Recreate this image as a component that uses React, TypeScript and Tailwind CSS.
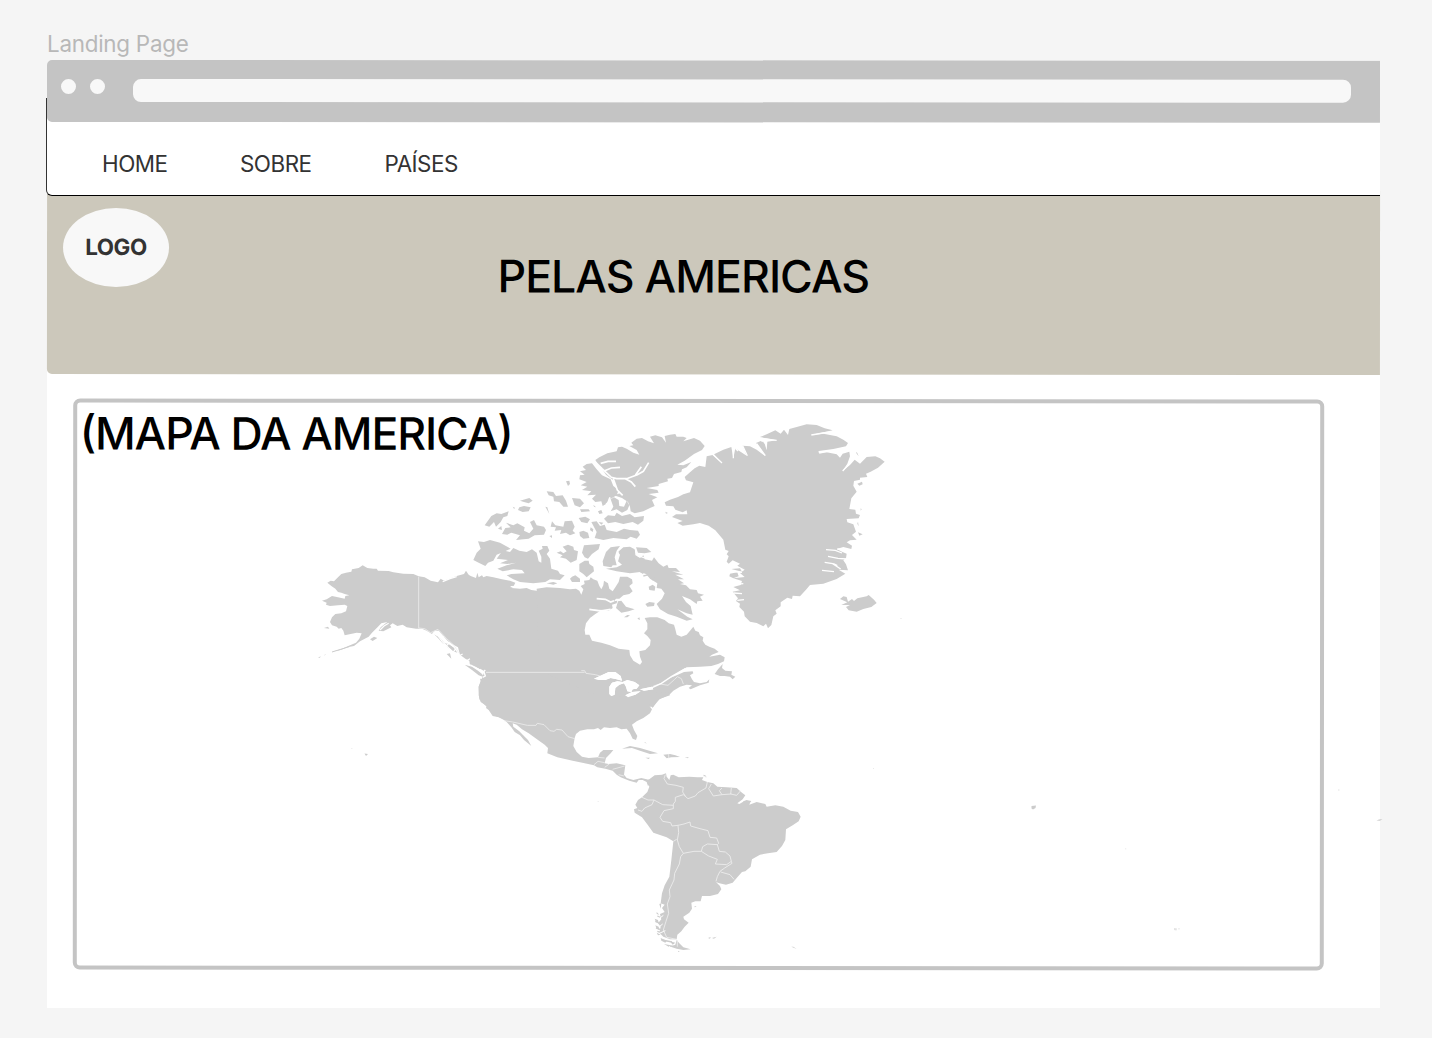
import React from "react";

const NAV_ITEMS = [
  { label: "HOME", width: "w-[138px]" },
  { label: "SOBRE", width: "w-[144.5px]" },
  { label: "PAÍSES", width: "w-[100px]" },
];

function BrowserBar() {
  return (
    <div className="relative z-10 h-[61.5px] w-[1332.5px] shrink-0 origin-left rotate-[0.03deg] rounded-l-[5px] bg-[#c4c4c4]">
      <div className="flex h-full items-start pl-[14px] pt-[18.5px]">
        <span className="size-[15px] rounded-full bg-[#f8f8f8]" />
        <span className="ml-[14px] size-[15px] rounded-full bg-[#f8f8f8]" />
        <span className="ml-[27.5px] h-[23px] w-[1218.500px] rounded-[8px] bg-[#f8f8f8]" />
      </div>
    </div>
  );
}

function NavBar() {
  return (
    <nav className="relative z-[5] -ml-px -mt-[23.500px] flex h-[97.500px] w-[1333.5px] shrink-0 items-end rounded-bl-[6px] border-b border-l border-b-black border-l-[#333333] bg-white pb-[17px] pl-[55px]">
      {NAV_ITEMS.map((item) => (
        <a key={item.label} className={`${item.width} text-[22.4px] leading-[28px] tracking-[-0.5px] text-[#333333]`}>
          {item.label}
        </a>
      ))}
    </nav>
  );
}

function Hero() {
  return (
    <header className="-mt-[6px] h-[184px] w-[1332.5px] shrink-0 origin-left rotate-[0.045deg] rounded-bl-[5px] bg-[#ccc8bb] pt-[17.5px]">
      <div className="flex">
        <div className="ml-[16px] flex h-[79px] w-[106px] items-center justify-center rounded-[50%] bg-[#f8f8f8] text-[22.4px] font-bold tracking-[-0.4px] text-[#333333]">
          LOGO
        </div>
        <h1 className="ml-[328.500px] mt-[40.500px] text-[44.6px] font-medium leading-[56px] tracking-[-0.95px] text-black">
          PELAS AMERICAS
        </h1>
      </div>
    </header>
  );
}

function AmericasMap() {
  return (
    <svg
      className="pointer-events-none absolute -top-[60px] -left-[47px] z-20 h-[1038px] w-[1432px]"
      viewBox="0 0 1432 1038"
      fill="#cccccc"
      aria-label="Mapa da América"
    >
      {/* Alaska and western Canada */}
      <g transform="translate(310 540) scale(.33333)">
        <path d="M52,128 62,122 72,124 84,112 94,102 108,98 124,95 126,88 146,84 158,76 172,84 190,86 200,86 204,92 236,93 250,97 280,101 310,102 326,109 344,112 362,122 384,127 392,116 402,122 440,108 462,102 468,92 476,104 482,108 498,114 502,98 506,112 516,106 520,112 530,108 550,112 576,118 600,122 616,128 610,140 604,144 630,146 650,144 664,150 680,152 688,166 690,156 684,148 700,148 724,146V560L590,545 582,540 566,532 548,528 536,510 528,504 530,498 512,486 506,466 506,440 512,424 510,416 520,418 526,408 524,396 510,388 496,380 480,376 478,362 466,356 450,344 444,322 430,314 414,304 400,288 386,272 374,272 366,282 350,272 336,266 318,266 290,262 278,254 262,258 248,250 240,256 244,262 220,274 206,272 212,262 232,246 214,250 204,260 186,278 176,290 150,304 132,318 112,322 92,330 72,334 96,326 120,316 138,308 148,296 155,280 140,278 122,282 104,286 100,272 94,264 86,266 80,260 66,256 60,246 66,232 76,222 94,220 108,214 112,198 104,194 84,196 60,198 48,194 50,188 36,182 50,178 66,168 84,172 104,176 106,168 118,166 104,162 94,158 84,156 76,146 64,138Z" />
        <path d="M180,298 192,290 202,294 188,303ZM42,264 54,260 58,266ZM44,344 50,341 42,347ZM24,353 32,349 30,353ZM410,342 420,340 424,356ZM372,282 384,288 392,296 408,314 398,310 386,296ZM404,310 416,312 430,322 442,338 426,332 412,322ZM464,374 486,380 504,392 516,402 522,412 506,406 486,390Z" />
        <path d="M66,336 92,328 118,320" fill="none" stroke="#cccccc" strokeWidth="3" />
        <path d="M602,140 640,138 664,142 682,132 700,126 724,132M398,125 420,116 440,110M462,370 484,376 506,388 524,402M368,278 384,288 398,306 416,324 436,342 456,360M380,274 394,290 412,306 432,320M392,298 402,290M408,318 420,308M430,336 440,322M210,270 222,258 236,250M446,348 458,342M470,362 480,356" fill="none" stroke="#fff" strokeWidth="3.5" />
        <path d="M326,110V264L344,266 362,278 384,268 410,296 432,316 446,338" fill="none" stroke="#eeeeee" strokeWidth="2.4" />
      </g>

      {/* Eastern Canada around Hudson Bay */}
      <g transform="translate(540 530) scale(.33333)">
        <path d="M-10,176 20,172 60,174 90,178 108,176 118,182 124,194 130,178 122,168 134,162 132,152 148,150 152,142 160,148 172,152 178,168 184,178 190,166 192,152 204,160 208,176 218,184 226,172 236,156 240,140 262,140 276,148 278,160 268,168 278,184 268,192 250,196 238,206 228,206 222,214 232,212 230,220 216,224 218,234 206,242 190,240 150,238 180,243 166,252 150,264 138,280 134,300 136,314 148,314 156,332 184,338 210,346 236,356 268,360 270,376 280,392 300,404 306,396 300,380 298,364 316,360 330,346 332,330 322,318 312,310 322,298 322,280 314,264 330,262 352,262 374,270 386,280 402,284 406,298 410,314 424,320 440,314 452,300 460,290 466,302 476,306 480,316 490,322 488,332 496,344 508,350 524,356 536,366 516,374 508,380 540,374 554,382 552,394 534,402 514,408 480,410 440,412 420,424 390,444 410,436 432,426 458,424 460,430 450,436 456,448 462,456 480,460 500,456 508,448 506,458 480,466 452,478 446,474 456,466 440,464 420,470 400,482 388,494 358,508 340,530H0Z" />
        <path d="M524,432 534,418 548,402 546,414 556,422 576,424 574,434 586,440 578,448 570,440 554,438 540,438ZM228,234 234,214 244,212 258,230 284,238 266,244 244,248ZM316,222 328,216 344,218 342,228 322,230ZM326,170 338,164 346,170 344,182 328,180ZM252,262 262,255 270,256 262,262ZM292,266 298,262 300,270ZM20,160 40,156 52,160 40,164Z" />
        <path d="M170,206 196,208 212,216 222,212M148,238 180,243 212,238" fill="none" stroke="#fff" strokeWidth="5" />
        <path d="M124,422 134,422 138,430 166,434 180,438M340,468 360,462 384,466 404,448 412,440 424,446 430,462" fill="none" stroke="#eeeeee" strokeWidth="2.4" />
        <path d="M162,446 188,434 206,426 226,426 242,438 246,452 230,448 212,444 196,450 178,450ZM208,492 208,470 216,458 232,454 248,456 262,450 284,456 298,466 290,476 278,478 274,486 262,484 258,470 252,460 238,464 226,474 224,494 214,498ZM256,496 276,486 302,484 286,494 264,502ZM300,478 336,470 340,478 312,482Z" fill="#fff" />
        <path d="M330,476 364,460 394,440 436,416" fill="none" stroke="#fff" strokeWidth="4" />
      </g>

      {/* United States, Mexico, Central America and the Caribbean */}
      <g transform="translate(470 650) scale(.33333)">
        <path d="M45,60 36,84 26,110 28,148 42,162 54,174 70,194 102,208 110,216 124,232 134,246 150,256 162,270 184,288 174,270 156,252 148,244 130,230 128,220 140,224 156,238 176,250 204,270 224,284 234,294 232,310 262,322 308,332 344,340 372,346 382,352 406,356 428,362 440,374 452,382 478,392 500,398 506,390 518,390 530,396 534,408 544,396 530,388 514,384 490,390 470,384 462,374 466,346 440,340 416,342 404,340 408,324 422,310 430,300 400,300 390,308 384,322 356,324 336,320 320,306 310,288 314,264 318,252 330,242 352,238 372,238 384,234 392,240 402,232 420,234 440,232 454,238 470,236 480,250 488,266 498,270 502,258 492,240 486,224 500,214 520,204 540,190 546,178 538,168 534,156 544,168 548,174 556,160 570,146 600,136 594,125 500,135 400,145 200,60Z" />
        <path d="M456,296 480,288 510,294 538,302 564,310 540,312 510,302 486,294ZM580,314 600,312 616,316 630,321 604,322 590,325ZM526,323 540,323 536,327ZM644,322 656,322 654,325Z" />
        <path d="M524,276l4,4M706,376l2,6" stroke="#cccccc" strokeWidth="2" />
        <path d="M48,67H344M102,212 128,216 172,226 198,226 202,220 222,224 240,242 252,244 260,238 276,240 294,260 314,266M372,344 384,334 404,338M384,322 404,324M404,352 418,342M428,358 464,348M446,374 462,378M596,312V325" fill="none" stroke="#eeeeee" strokeWidth="2.4" />
        <path d="M372,86 398,74 416,66 436,66 452,78 456,92 440,88 422,84 406,90 388,90ZM418,132 418,110 426,98 442,94 458,96 472,90 494,96 508,106 500,116 488,118 484,126 472,124 468,110 462,100 448,104 436,114 434,134 424,138ZM466,136 486,126 512,124 496,134 474,142ZM510,118 546,110 550,118 522,122Z" fill="#fff" />
        <path d="M30,58 42,66 46,78 38,82M46,60 40,66" fill="none" stroke="#fff" strokeWidth="4" />
      </g>

      {/* South America */}
      <g transform="translate(620 760) scale(.33333)">
        <path d="M78,60 88,58 104,46 126,44 138,40 140,50 148,60 152,46 160,44 176,52 208,50 232,52 250,52 246,60 262,66 280,70 292,80 320,82 350,84 366,98 376,106 368,118 352,130 358,132 372,124 392,122 388,134 410,126 436,132 440,140 466,136 490,140 512,152 534,156 542,170 536,184 518,196 498,208 496,240 486,258 470,276 444,280 420,284 396,298 392,320 376,334 366,336 352,352 338,368 318,374 298,370 288,366 300,378 304,388 294,402 270,408 246,408 242,424 226,424 214,428 216,446 208,458 190,470 192,478 206,488 194,500 184,514 172,524 170,538 150,538 130,530 118,518 122,500 114,490 124,478 120,462 134,456 126,444 134,434 122,430 126,400 134,376 148,350 154,300 160,244 140,232 100,218 84,196 66,172 44,158 42,148 52,144 46,134 54,120 66,112 82,96 88,80Z" />
        <path d="M370,124 380,120 394,124 386,132 372,132ZM170,540 178,550 190,562 212,568 190,570 170,566 152,560 166,554ZM118,432 124,430 122,446ZM110,456l8,8-8-2ZM104,476l10,4 2,8-8-2ZM106,496l10,4 2,10-8-4ZM110,518l12,6-8,2ZM122,534l18,8-4,6-12-6ZM132,552l20,4-6,4ZM150,544l16,4-8,6ZM174,572l6,4-6-1ZM224,438l6,2-6,2ZM264,534 272,531 270,536ZM276,534 290,530 282,536ZM514,560 520,560 530,567ZM250,44l6,2-4,4Z" />
        <path d="M112,468l14,6M106,484l18,8M108,504l16,6M112,514l12,4M126,540l30,6M150,558l24,2" stroke="#cccccc" strokeWidth="4" />
        <path d="M120,474 130,466M118,500 128,492M118,520 136,512" stroke="#fff" strokeWidth="3" />
        <path d="M136,44 132,56 142,72 168,76 190,82 188,96 196,108M262,66 258,84 234,98 226,108 204,116 190,104 166,112 166,124 160,132 160,146 132,152 120,172 128,184 152,188 156,198 174,196M274,72 266,86 280,108 306,104 334,102M306,84 298,92 306,104M334,84 332,102 350,106 362,92M66,112 84,120 102,120 128,134 160,136M102,120 96,134 74,144 66,154 54,150M174,196 192,192 210,186 212,198 240,206 264,212 270,232 290,234 296,250 292,254 262,252 248,260 244,274 222,274 190,280 178,260 172,240 176,218 174,196M160,244 170,238M292,254 298,274 316,276 330,288 334,304 320,314 286,312 292,298 266,288 244,274M334,304 336,310 314,324 300,334 292,350 288,364M302,336 330,344 342,358M190,280 182,290 178,312 164,340 162,360 148,390 150,410 142,432 146,460 138,484 130,510 140,532 170,538M172,540V560" fill="none" stroke="#eeeeee" strokeWidth="2.6" />
      </g>

      {/* Queen Elizabeth Islands */}
      <g transform="translate(470 410) scale(.33333)">
        <path d="M376,150 388,142 412,130 440,124 444,112 456,110 470,116 490,128 508,134 500,120 478,108 490,106 484,98 500,86 516,84 534,94 552,100 540,80 556,76 576,82 588,98 584,78 600,74 616,72 620,80 640,80 650,84 640,94 672,84 690,92 704,108 696,120 672,132 644,152 622,164 640,166 664,156 650,172 636,178 634,186 612,192 606,204 592,206 594,214 566,222 566,228 530,234 562,240 566,248 536,252 562,262 546,270 554,288 540,294 520,304 494,310 482,304 480,290 474,276 456,264 432,256 450,250 440,236 432,212 408,194 396,176 384,164Z" />
        <path d="M350,162 366,160 380,178 396,196 422,208 430,228 446,240 440,256 420,268 408,282 398,288 394,274 376,276 366,266 378,254 352,256 364,244 336,240 352,230 332,226 350,216 328,208 330,196 344,194 330,184 348,180 338,170ZM422,268 432,262 446,270 448,288 462,290 470,272 478,286 472,300 456,308 440,298 422,304 430,290ZM402,326 414,316 434,318 440,308 456,318 480,312 494,322 522,318 520,332 504,344 488,336 460,342 436,336 414,340ZM364,336 380,334 390,348 404,344 410,360 440,366 462,356 480,360 504,362 510,374 500,386 482,380 470,388 430,384 400,390 374,384 380,366ZM328,366 340,362 354,368 358,384 340,386 330,378ZM326,324 346,320 360,328 352,340 334,336ZM246,334 256,346 280,350 284,334 306,332 314,350 308,362 316,370 300,376 288,368 270,372 274,360 254,362 258,352 242,350ZM96,372 106,354 122,352 108,338 130,346 142,340 164,352 162,362 178,370 190,356 180,336 192,330 200,346 222,350 228,360 222,374 194,376 176,386 138,390 150,376 124,368 112,374ZM44,346 64,318 80,310 94,312 116,304 112,318 100,322 92,336 78,350 72,336 58,350ZM84,356 94,348 96,360ZM148,292 162,288 182,292 176,304 158,306 144,300ZM150,272 178,264 188,272 176,280 162,276ZM230,244 250,246 258,258 278,256 288,272 294,290 280,290 268,276 252,274 250,260 236,256ZM306,264 330,266 342,280 330,292 314,286ZM288,214 298,212 300,222 294,228ZM330,298 356,298 360,304 334,306ZM384,304 394,300 398,310 388,312ZM226,290 232,292 238,312ZM238,378 246,376 246,384ZM128,290l8,4-4,2ZM370,284l8,8-6,-2ZM362,352l8,6-2,8-8-6ZM386,336l14,2-6,6Z" />
        <path d="M368,148 396,176 424,202 440,206 470,206 502,194 520,184 536,158M466,206 484,216 496,230M430,206 442,240 458,256M392,160 414,154 438,154M404,182 424,174 450,172M496,196 514,170M420,262 414,278 408,284" fill="none" stroke="#fff" strokeWidth="5" />
      </g>

      {/* Banks, Victoria and Baffin islands */}
      <g transform="translate(470 500) scale(.33333)">
        <path d="M24,124 42,126 60,120 90,128 122,146 100,156 80,164 70,182 54,188 46,198 26,188 10,180 20,158 32,146ZM80,176 92,160 104,152 120,156 130,144 148,152 170,156 186,148 200,158 206,184 214,188 214,170 206,152 218,146 216,138 232,138 238,152 230,162 240,176 244,206 264,212 270,222 284,226 270,240 240,238 226,246 190,250 150,246 130,238 110,226 124,222 164,220 156,210 130,208 98,214 82,206 110,196 138,188 112,192 90,190 114,180ZM260,158 272,154 280,160 290,154 278,140 294,134 310,140 312,150 324,154 320,180 302,188 288,176 270,172 278,166ZM342,136 390,132 386,148 366,162 354,176 344,172 336,158ZM328,192 344,182 356,182 358,192 370,200 372,214 350,232 340,222 328,214ZM300,236 306,230 316,226 330,236 330,246 306,246ZM250,220 264,226 260,232ZM398,184 408,156 422,142 450,138 440,152 434,172 440,196 428,196 424,202 400,198ZM444,184 450,164 444,156 460,142 480,140 494,148 500,168 510,174 520,166 524,178 546,182 552,172 566,190 580,200 592,194 596,204 618,204 630,216 606,214 640,224 616,224 642,238 624,238 642,250 630,252 648,256 660,268 680,270 684,280 702,284 690,290 698,302 682,304 680,312 660,298 636,288 648,306 662,318 668,344 650,340 622,328 652,350 668,358 650,362 620,350 594,342 570,328 560,312 576,296 584,280 574,266 560,264 562,250 540,236 528,222 510,216 480,220 440,214 408,206 440,202 456,194ZM498,142 530,144 544,156 524,160 504,158Z" />
        <path d="M496,142 498,164 524,174M444,154 442,184" fill="none" stroke="#fff" strokeWidth="4" />
        <path d="M510,214l10,6M520,228l16-4M546,240l8-6" fill="none" stroke="#cccccc" strokeWidth="4" />
      </g>

      {/* Greenland and Iceland */}
      <g transform="translate(650 415) scale(.33333)">
        <path d="M44,262 60,254 84,246 100,238 120,232 130,202 108,196 104,186 120,172 134,160 148,152 166,156 168,140 170,124 188,120 216,144 192,118 220,104 244,96 250,130 256,100 268,108 290,122 278,92 300,94 320,104 346,124 330,98 318,84 332,78 344,86 350,106 352,80 380,76 330,66 350,58 376,46 392,56 402,44 414,60 418,42 440,36 470,28 500,30 524,40 548,46 510,54 482,60 520,56 560,64 580,74 594,84 588,94 550,102 506,108 508,116 530,112 560,118 570,128 578,116 598,110 600,124 592,146 578,168 600,150 614,134 630,146 650,126 676,124 690,130 704,140 684,158 662,170 648,176 652,186 630,188 630,194 612,198 610,212 620,230 604,250 598,282 616,284 618,296 630,300 626,310 590,312 592,322 610,328 618,350 606,360 620,374 600,376 590,382 606,392 604,402 580,396 560,402 576,410 590,416 588,430 580,436 588,448 594,466 566,464 586,476 560,492 520,506 480,510 468,524 450,544 428,542 426,552 412,548 392,562 392,574 376,586 380,596 370,604 364,630 354,640 348,626 340,634 320,624 300,620 284,604 282,590 268,576 270,566 258,558 264,550 248,530 270,526 250,516 272,510 276,498 250,490 284,486 270,474 284,464 262,452 270,446 248,436 236,446 230,440 236,424 230,418 236,408 226,404 220,374 196,346 176,332 150,324 130,328 98,332 82,324 98,318 66,306 78,298 112,298 110,286 98,292 76,284 70,274 48,272Z" />
        <path d="M326,82 340,80 346,100 336,100ZM570,552 580,544 590,546 594,560 606,552 612,558 622,550 650,544 656,540 672,554 680,564 664,576 640,582 620,590 596,586 588,576 600,570 574,570 592,562ZM622,206 636,200 638,208 628,212ZM618,110l4,4 4,10-6-8ZM622,262v14M624,352l14,6-10,4ZM624,320l2,14-4-8ZM632,280l3,3-3,4ZM46,290l8,4-6,2ZM240,476 262,472 266,484 250,490 238,484ZM244,462 270,460 276,470Z" />
        <path d="M528,404 556,406 576,414M534,424 564,430 590,432M524,442 548,446 572,462M516,466 552,470M550,446 562,452M562,402 578,404M240,468 276,472M256,508 280,506M250,534 276,536M262,556 282,554M188,118 216,144M250,98V130M256,100 264,108M278,92 292,122M320,86 346,122M332,70 380,76M484,60 520,54 548,50M506,111 550,108 594,108M578,168 596,148 606,130" fill="none" stroke="#fff" strokeWidth="4" />
      </g>

      {/* Scattered oceanic islands */}
      <path d="M1031.5,806 1036,805.5 1035.5,808 1033,809.5 1031.5,808.5ZM364.5,753.5 368,754 366,756ZM1376.500,820.500 1379,819.500 1382.500,819 1380,820.800Z" />
      <path
        opacity=".55"
        d="M1174,928l3,.5-.5,2-2.500-.5ZM1178,928.500h2v.7h-2ZM1338,789.500h1.500v1h-1.500ZM1125,848.500h1.200v.8h-1.200ZM351,748h1.500v.5H351ZM597.500,801h1.500v.6h-1.500ZM873,768h1v.7h-1ZM900,618h2v.5h-2Z"
      />
    </svg>
  );
}

function MapPanel() {
  return (
    <section className="ml-[25.500px] mt-[25.500px] h-[571px] w-[1250.500px] shrink-0 rotate-[0.045deg] rounded-[7px] border-4 border-[#c4c4c4] pl-[2.500px] pt-[3.200px]">
      <h2 className="text-[44.6px] font-medium leading-[56px] tracking-[-1.1px] text-black [font-feature-settings:'case']">
        (MAPA DA AMERICA)
      </h2>
    </section>
  );
}

export default function App() {
  return (
    <div className="h-[1038px] w-[1432px] overflow-hidden bg-[#f5f5f5] pl-[47px] pt-[30px] font-['Inter',sans-serif]">
      <p className="h-[30px] text-[22.4px] leading-[28px] tracking-[-0.25px] text-[#b8b8b8]">Landing Page</p>
      <main className="relative w-[1332.5px]">
        <div className="flex h-[948px] flex-col rounded-tl-[5px] bg-white">
          <BrowserBar />
          <NavBar />
          <Hero />
          <MapPanel />
        </div>
        <AmericasMap />
      </main>
    </div>
  );
}
